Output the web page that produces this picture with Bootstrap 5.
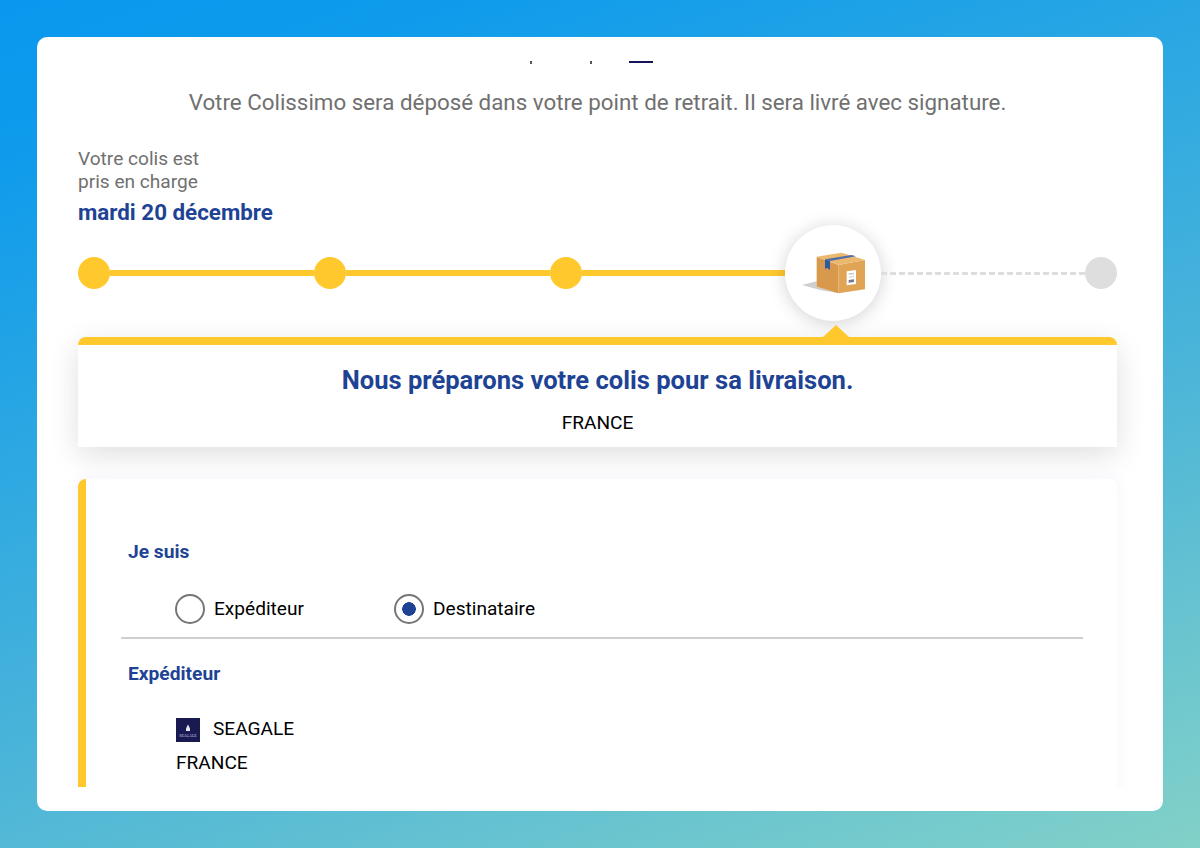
<!DOCTYPE html>
<html lang="fr">
<head>
<meta charset="utf-8">
<title>Colissimo</title>
<link href="https://cdn.jsdelivr.net/npm/bootstrap@5.3.0/dist/css/bootstrap.min.css" rel="stylesheet">
<style>
html,body{height:100%;margin:0}
body{font-family:Roboto,"Liberation Sans",sans-serif;background:linear-gradient(161deg,#0a98ef 0%,#0e9bec 12%,#4cb5d8 62%,#82d1c8 100%);overflow:hidden;padding:37px;color:#000}
.shell{height:774px;background:#fff;border-radius:10px;overflow:hidden}
.clip{height:750px;overflow:hidden;padding:0 46px 0 41px}
.tabmarks{height:32px;padding-top:24px;margin-left:-41px;margin-right:-46px}
.tabmarks span{display:block;background:#555;height:3px;width:2px}
.tabmarks .m1{margin-left:493px}
.tabmarks .m2{margin-left:58px}
.tabmarks .m3{margin-left:37px;width:24px;height:2px;background:#14145a}
.intro{font-size:22.35px;line-height:28px;color:#707070;text-align:center;margin:0;padding-top:19px;margin-left:-41px;margin-right:-46px;padding-right:5px}
.since{margin-top:31px;font-size:19.1px;line-height:23px;color:#707070}
.when{font-size:22.35px;line-height:28px;font-weight:700;color:#1e4394;margin-top:5px}
.track{height:96px;margin-top:-1px}
.dot{width:32px;height:32px;border-radius:50%;background:#ffc82c;flex:none}
.dot.off{background:#dedede}
.seg{flex:1;height:6px;background:#ffc82c}
.seg.off{height:0;background:none;border-top:3px dashed #dedede}
.hub{width:96px;height:96px;border-radius:50%;background:#fff;box-shadow:0 2px 18px rgba(0,0,0,.18);flex:none}
.panel{margin-top:16px;background:#fff;border-top:8px solid #ffc82c;border-radius:8px 8px 0 0;height:110px;box-shadow:0 8px 30px rgba(0,0,0,.13);text-align:center;position:relative}
.panel::before{content:"";position:absolute;left:745px;top:-20px;border-left:13px solid transparent;border-right:13px solid transparent;border-bottom:12px solid #ffc82c}
.panel h2{font-size:25.55px;line-height:32px;font-weight:700;color:#1e4394;margin:0;padding-top:19px}
.panel p{font-size:19.1px;line-height:24px;margin:0;padding-top:15px}
.info{margin-top:32px;background:#fff;border-left:8px solid #ffc82c;border-radius:8px;height:360px;box-shadow:0 0 14px rgba(120,120,255,.09);padding:60px 34px 0 35px;position:relative}
.info h3{font-size:19.2px;line-height:26px;font-weight:700;color:#1e4394;margin:0 0 0 7px}
.opts{padding:15px 0 0 54px;height:72px}
.opt{font-size:19.1px;line-height:30px}
.opt.first{width:219px}
.opt .form-check-input{width:30px;height:30px;margin:0 9px 0 0;border:2px solid #767676;background-image:none;flex:none}
.opt .form-check-input:checked{background-color:#fff;border-color:#767676;background-image:radial-gradient(circle,#1e4394 0,#1e4394 6.5px,transparent 7.1px)}
.rule{height:2px;background:#cfcfcf;margin:0;opacity:1;border:0}
.expd{padding-top:22px}
.sender{padding:30px 0 0 55px;font-size:19.1px;line-height:24px}
.brandrow{gap:13px}
.brand{width:24px;height:24px;flex:none;display:block;margin-top:1px}
.sender .land{margin-top:9px}
</style>
</head>
<body>
<div class="shell">
  <div class="clip">
    <div class="tabmarks d-flex"><span class="m1"></span><span class="m2"></span><span class="m3"></span></div>
    <p class="intro">Votre Colissimo sera déposé dans votre point de retrait. Il sera livré avec signature.</p>
    <div class="since">Votre colis est<br>pris en charge</div>
    <div class="when">mardi 20 décembre</div>
    <div class="track d-flex align-items-center">
      <div class="dot"></div><div class="seg"></div>
      <div class="dot"></div><div class="seg"></div>
      <div class="dot"></div><div class="seg"></div>
      <div class="hub">
        <svg width="96" height="96" viewBox="45 45 288 288" aria-hidden="true">
          <path d="M96 225 140 214V230L205 250 150 240Z" fill="#cfcfcf"/>
          <path d="M140 140 205 165V250L140 230Z" fill="#d8994c"/>
          <path d="M205 165 285 150V238L205 250Z" fill="#e0a455"/>
          <path d="M140 140 215 128 285 150 205 165Z" fill="#ecb86e"/>
          <path d="M165 148 245 135 258 139 180 153Z" fill="#4f6ea8"/>
          <path d="M165 148 180 153V180L172 174 165 176Z" fill="#2d5aa5"/>
          <path d="M230 184 258 180V222L230 226Z" fill="#fff"/>
          <path d="M236 190 252 188V193L236 195ZM236 200 252 198V201L236 203Z" fill="#ccc"/>
          <path d="M236 210 252 208V216L236 218Z" fill="#778"/>
        </svg>
      </div>
      <div class="seg off"></div>
      <div class="dot off"></div>
    </div>
    <div class="panel">
      <h2>Nous préparons votre colis pour sa livraison.</h2>
      <p>FRANCE</p>
    </div>
    <div class="info">
      <h3>Je suis</h3>
      <div class="opts d-flex">
        <label class="opt first d-flex align-items-center"><input class="form-check-input" type="radio" name="who">Expéditeur</label>
        <label class="opt d-flex align-items-center"><input class="form-check-input" type="radio" name="who" checked>Destinataire</label>
      </div>
      <hr class="rule">
      <h3 class="expd">Expéditeur</h3>
      <div class="sender">
        <div class="d-flex align-items-start brandrow">
          <svg class="brand" viewBox="0 0 24 24" aria-hidden="true">
            <rect width="24" height="24" fill="#1a1a52"/>
            <path d="M12 6.5 14 10.5V13H10V10.5Z" fill="#e8e8f0"/>
            <text x="12" y="18.5" font-size="3.8" fill="#d8d8e8" text-anchor="middle" font-family="Liberation Serif,serif">SEAGALE</text>
          </svg>
          <span>SEAGALE</span>
        </div>
        <div class="land">FRANCE</div>
      </div>
    </div>
  </div>
</div>
<script src="https://cdn.jsdelivr.net/npm/bootstrap@5.3.0/dist/js/bootstrap.bundle.min.js"></script>
</body>
</html>
